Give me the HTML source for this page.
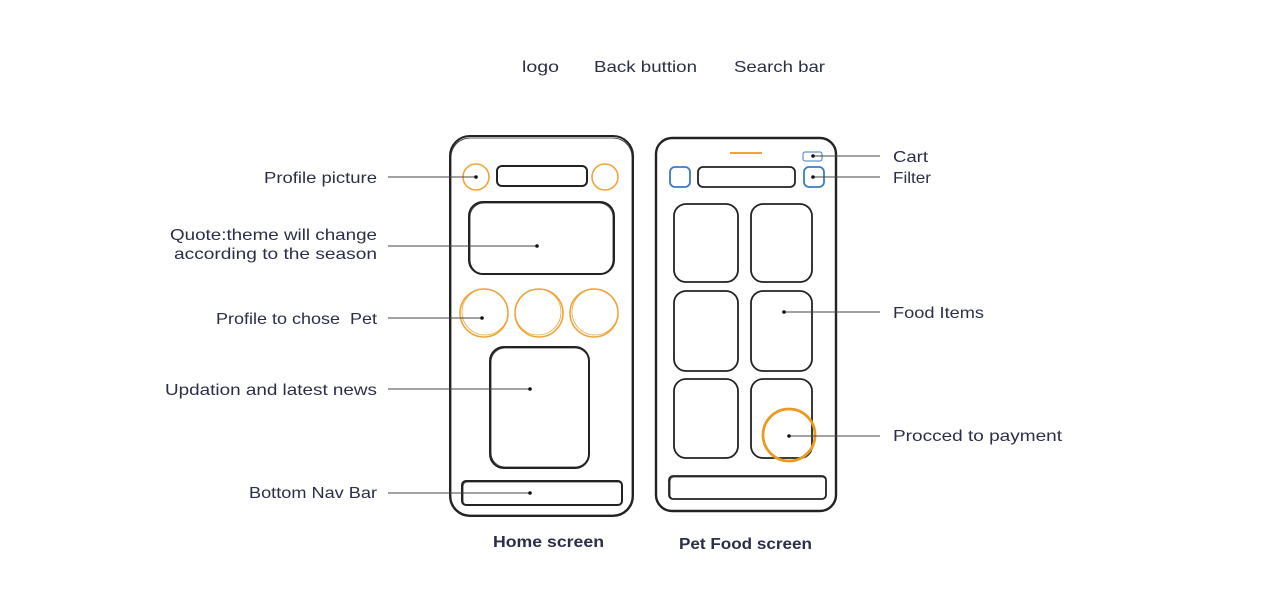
<!DOCTYPE html>
<html><head><meta charset="utf-8"><style>
html,body{margin:0;padding:0;background:#fff;width:1280px;height:599px;overflow:hidden}
svg{position:absolute;left:0;top:0}
text{font-family:"Liberation Sans",sans-serif;font-size:16px;fill:#2b2e48}
</style></head><body>
<svg width="1280" height="599" viewBox="0 0 1280 599">
<text x="522" y="72" textLength="37" lengthAdjust="spacingAndGlyphs">logo</text>
<text x="594" y="72" textLength="103" lengthAdjust="spacingAndGlyphs">Back buttion</text>
<text x="734" y="72" textLength="91" lengthAdjust="spacingAndGlyphs">Search bar</text>

<!-- Home phone -->
<g fill="none" stroke="#222" stroke-width="2">
<rect x="450" y="136" width="183" height="380" rx="20"/>
<rect x="451" y="138" width="181" height="377" rx="19" stroke-width="0.8"/>
<rect x="497" y="166" width="90" height="20" rx="5"/>
<rect x="469" y="202" width="145" height="72" rx="14"/>
<rect x="470" y="203" width="143" height="71" rx="14" stroke-width="0.8"/>
<rect x="490" y="347" width="99" height="121" rx="14"/>
<rect x="491" y="348" width="98" height="119" rx="14" stroke-width="0.8"/>
<rect x="462" y="481" width="160" height="24" rx="4"/>
<rect x="463" y="482" width="159" height="23" rx="4" stroke-width="0.8"/>
</g>
<g fill="none" stroke="#f0a43a" stroke-width="1.6">
<circle cx="476" cy="177" r="13"/>
<circle cx="605" cy="177" r="13"/>
<circle cx="484" cy="313" r="24"/><circle cx="485" cy="312" r="23" stroke-width="0.8"/>
<circle cx="539" cy="313" r="24"/><circle cx="538" cy="312" r="23" stroke-width="0.8"/>
<circle cx="594" cy="313" r="24"/><circle cx="595" cy="312" r="23" stroke-width="0.8"/>
</g>

<!-- Pet food phone -->
<g fill="none" stroke="#222" stroke-width="2.4">
<rect x="656" y="138" width="180" height="373" rx="16"/>
</g>
<g fill="none" stroke="#222" stroke-width="1.8">
<rect x="698" y="167" width="97" height="20" rx="5"/>
<rect x="674" y="204" width="64" height="78" rx="12"/>
<rect x="751" y="204" width="61" height="78" rx="12"/>
<rect x="674" y="291" width="64" height="80" rx="12"/>
<rect x="751" y="291" width="61" height="80" rx="12"/>
<rect x="674" y="379" width="64" height="79" rx="12"/>
<rect x="751" y="379" width="61" height="79" rx="12"/>
<rect x="669" y="476" width="157" height="23" rx="4"/>
<rect x="670" y="477" width="156" height="22" rx="4" stroke-width="0.8"/>
</g>
<line x1="730" y1="153" x2="762" y2="153" stroke="#f0a43a" stroke-width="2"/>
<g fill="none" stroke="#3a7cc4" stroke-width="1.8">
<rect x="803" y="152" width="19" height="9" rx="2" stroke-width="1"/>
<rect x="670" y="167" width="20" height="20" rx="5"/>
<rect x="804" y="167" width="20" height="20" rx="5"/>
</g>
<circle cx="789" cy="435" r="26" fill="none" stroke="#ec9a1e" stroke-width="2.8"/>

<!-- leader lines -->
<g stroke="#444" stroke-width="1">
<line x1="388" y1="177" x2="476" y2="177"/>
<line x1="388" y1="246" x2="537" y2="246"/>
<line x1="388" y1="318" x2="482" y2="318"/>
<line x1="388" y1="389" x2="530" y2="389"/>
<line x1="388" y1="493" x2="530" y2="493"/>
<line x1="813" y1="156" x2="880" y2="156"/>
<line x1="813" y1="177" x2="880" y2="177"/>
<line x1="784" y1="312" x2="880" y2="312"/>
<line x1="789" y1="436" x2="880" y2="436"/>
</g>
<g fill="#111">
<circle cx="476" cy="177" r="1.8"/><circle cx="537" cy="246" r="1.8"/>
<circle cx="482" cy="318" r="1.8"/><circle cx="530" cy="389" r="1.8"/>
<circle cx="530" cy="493" r="1.8"/><circle cx="813" cy="156" r="1.8"/>
<circle cx="813" cy="177" r="1.8"/><circle cx="784" cy="312" r="1.8"/>
<circle cx="789" cy="436" r="1.8"/>
</g>

<!-- left labels -->
<text x="264" y="183" textLength="113" lengthAdjust="spacingAndGlyphs">Profile picture</text>
<text x="170" y="240" textLength="207" lengthAdjust="spacingAndGlyphs">Quote:theme will change</text>
<text x="174" y="259" textLength="203" lengthAdjust="spacingAndGlyphs">according to the season</text>
<text x="216" y="324" textLength="161" lengthAdjust="spacingAndGlyphs">Profile to chose&#160; Pet</text>
<text x="165" y="395" textLength="212" lengthAdjust="spacingAndGlyphs">Updation and latest news</text>
<text x="249" y="498" textLength="128" lengthAdjust="spacingAndGlyphs">Bottom Nav Bar</text>
<!-- right labels -->
<text x="893" y="162" textLength="35" lengthAdjust="spacingAndGlyphs">Cart</text>
<text x="893" y="183" textLength="38" lengthAdjust="spacingAndGlyphs">Filter</text>
<text x="893" y="318" textLength="91" lengthAdjust="spacingAndGlyphs">Food Items</text>
<text x="893" y="441" textLength="169" lengthAdjust="spacingAndGlyphs">Procced to payment</text>

<text x="493" y="547" textLength="111" lengthAdjust="spacingAndGlyphs" style="font-weight:bold">Home screen</text>
<text x="679" y="549" textLength="133" lengthAdjust="spacingAndGlyphs" style="font-weight:bold">Pet Food screen</text>
</svg>
</body></html>
